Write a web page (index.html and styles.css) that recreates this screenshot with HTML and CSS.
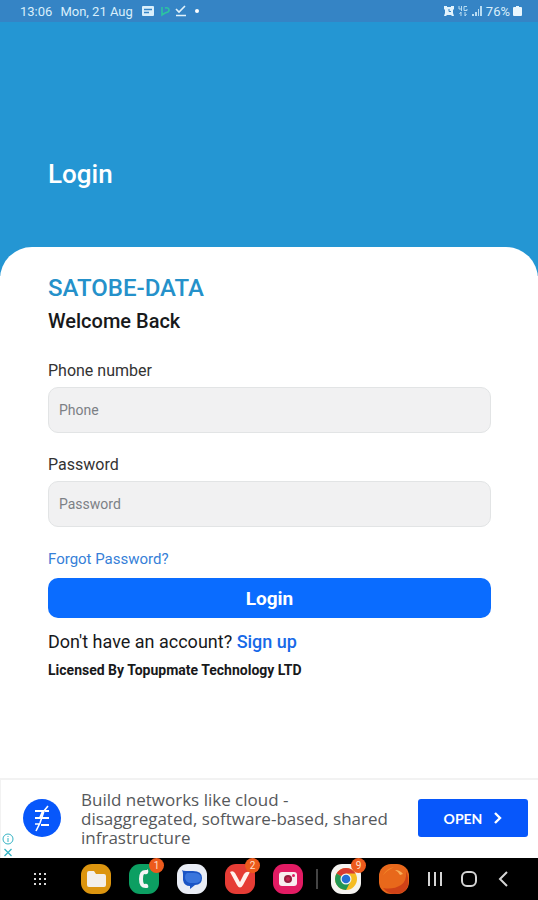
FILE: index.html
```html
<!DOCTYPE html>
<html lang="en">
<head>
<meta charset="utf-8">
<meta name="viewport" content="width=device-width, initial-scale=1">
<title>Login</title>
<link rel="stylesheet" href="styles.css">
</head>
<body>
<div class="status">
  <span>13:06</span>
  <span class="date">Mon, 21 Aug</span>
  <svg width="14" height="12" viewBox="0 0 14 12"><rect x="1" y="1" width="12" height="10" rx="1" fill="#d9effb"/><path d="M3 4.500h8M3 7.500h5" stroke="#3584c5" stroke-width="1.500"/></svg>
  <svg width="12" height="12" viewBox="0 0 12 12" fill="none" stroke="#2cc5a0" stroke-width="1.600"><path d="M3 2v8l3-2M6 3c4-1 5 2 3 4L6 8"/></svg>
  <svg width="12" height="12" viewBox="0 0 12 12" fill="none" stroke="#e2f3fc" stroke-width="1.600"><path d="M1 4l3 3 6-6M1 10.500h10"/></svg>
  <span class="dot"></span>
  <span class="status-right">
    <svg width="12" height="12" viewBox="0 0 12 12"><path d="M1 1h3v1h4V1h3v3l-1 1v3l1 3H9l-1-1H4l-1 1H1l1-3V5L1 4z" fill="#e2f3fc"/><circle cx="6" cy="6" r="4" fill="#e2f3fc"/><path d="M6 4v2.500h2" fill="none" stroke="#3584c5"/></svg>
    <svg width="10" height="12" viewBox="0 0 10 12" fill="none" stroke="#b9ddf3" stroke-width="1"><path d="M1 1v3h3M3.500 1v5M9 1.500H6v4h3V4M3 11V7L1.500 9M7 7v4l1.500-2"/></svg>
    <svg width="12" height="12" viewBox="0 0 12 12" fill="#b9ddf3"><path d="M1 9h2v2H1zM4 7h2v4H4zM7 4h1v7H7zM9 1h2v10H9z"/></svg>
    <span>76%</span>
    <svg width="9" height="12" viewBox="0 0 9 12"><path d="M3 1h3v1h2q1 0 1 1v7q0 1-1 1H1q-1 0-1-1V3q0-1 1-1h2z" fill="#e9f6fd"/></svg>
  </span>
</div>
<header class="hero"><h1>Login</h1></header>
<main class="card">
  <h2>SATOBE-DATA</h2>
  <p class="welcome">Welcome Back</p>
  <form>
    <label for="phone">Phone number</label>
    <input id="phone" type="tel" placeholder="Phone">
    <label for="password">Password</label>
    <input id="password" type="password" placeholder="Password">
    <a class="forgot" href="#">Forgot Password?</a>
    <button class="submit" type="submit">Login</button>
  </form>
  <p class="signup">Don't have an account? <a href="#">Sign up</a></p>
  <p class="license">Licensed By Topupmate Technology LTD</p>
</main>
<aside class="ad">
  <div class="ad-marks">
    <svg width="12" height="12" viewBox="0 0 12 12" fill="none" stroke="#36b3c4"><circle cx="6" cy="6" r="5"/><path d="M6 5v4M6 3v1"/></svg>
    <svg width="12" height="12" viewBox="0 0 12 12" stroke="#36b3c4" stroke-width="1.300"><path d="M2.500 3l7 7M9.500 3l-7 7"/></svg>
  </div>
  <svg class="ad-logo" width="38" height="38" viewBox="0 0 38 38"><circle cx="19" cy="19" r="19" fill="#0757fb"/><g fill="none" stroke="#fff" stroke-width="2"><path d="M12 12h8l-3 7h-5M22 12h4M19 19h7M18 26h8"/><path d="M12 25h4M13 32l4-8 4-12 4-5" stroke-width="1.600"/></g></svg>
  <p>Build networks like cloud - disaggregated, software-based, shared infrastructure</p>
  <button class="open" type="button">OPEN <svg width="8" height="12" viewBox="0 0 8 12" fill="none" stroke="#fff" stroke-width="2.400"><path d="M1 1l5 5-5 5"/></svg></button>
</aside>
<nav class="dock">
  <svg width="14" height="14" viewBox="0 0 14 14" fill="#d8d8d8"><path d="M1 1h2v2H1zM6 1h2v2H6zM11 1h2v2h-2zM1 6h2v2H1zM6 6h2v2H6zM11 6h2v2h-2zM1 11h2v2H1zM6 11h2v2H6zM11 11h2v2h-2z"/></svg>
  <span class="app"><svg viewBox="0 0 30 30"><rect width="30" height="30" rx="11" fill="#dc950f"/><path d="M6 9q0-2 2-2h5l2 3h8q2 0 2 2v9q0 2-2 2H8q-2 0-2-2z" fill="#f3efea"/></svg></span>
  <span class="app"><svg viewBox="0 0 30 30"><rect width="30" height="30" rx="11" fill="#0c9f62"/><path d="M18 6q-8-1-8 9t8 9q2 0 1-3-1-2-4-1-1-1-1-5t1-5q3 1 4-1 1-3-1-4z" fill="#f4f4f4"/></svg><b>1</b></span>
  <span class="app"><svg viewBox="0 0 30 30"><rect width="30" height="30" rx="11" fill="#e9edf5"/><path d="M5 6q1 1 4 1h7q9 0 9 7t-7 7l-5 4v-3q-6 0-7-6V10q0-2-1-4z" fill="#1b55c5"/><path d="M10 9h7q7 0 7 5t-6 5h-5q-5-1-5-6 0-3 2-4z" fill="#3975dd"/></svg></span>
  <span class="app"><svg viewBox="0 0 30 30"><rect width="30" height="30" rx="11" fill="#e63c35"/><path d="M5 8q3-2 5 1l5 9 4-8q2-3 6-2l-7 13q-3 5-6 0z" fill="#fff2ee"/></svg><b>2</b></span>
  <span class="app"><svg viewBox="0 0 30 30"><rect width="30" height="30" rx="11" fill="#e21b63"/><rect x="6" y="8" width="18" height="14" rx="3" fill="#f8edf0"/><circle cx="15" cy="15" r="4" fill="#941c3d"/><circle cx="15" cy="15" r="2" fill="#c62452"/><circle cx="20.500" cy="11.500" r="1.500" fill="#e21b63"/></svg></span>
  <i class="divider"></i>
  <span class="app"><svg viewBox="0 0 30 30"><rect width="30" height="30" rx="11" fill="#f5f4f1"/><circle cx="15" cy="15" r="11" fill="#f5bc22"/><path d="M15 15L5.500 9.500A11 11 0 0 1 24.500 9.500H15z" fill="#d83b30"/><path d="M5.500 9.500A11 11 0 0 0 15 26l4.500-8.500L15 15z" fill="#219653"/><circle cx="15" cy="15" r="5.500" fill="#f5f4f1"/><circle cx="15" cy="15" r="4.300" fill="#246fd5"/></svg><b>9</b></span>
  <span class="app"><svg viewBox="0 0 30 30"><rect width="30" height="30" rx="12" fill="#e8681b"/><path d="M27 7q1 10-5 14-8 5-18 3 5 6 12 6 10 0 13-8 1-8-2-15z" fill="#cf4217"/><path d="M4 11q4-7 11-8-6 3-11 8z" fill="#f18528"/><path d="M16 6q5 0 8 4l-3 1q-1-3-5-5z" fill="#f8b05b"/></svg></span>
  <button type="button" aria-label="Recent apps"><svg width="16" height="16" viewBox="0 0 16 16" stroke="#d5d5d5" stroke-width="2"><path d="M2 1v14M8 1v14M14 1v14"/></svg></button>
  <button type="button" aria-label="Home"><svg width="16" height="16" viewBox="0 0 16 16" fill="none" stroke="#d5d5d5" stroke-width="2"><rect x="1" y="1" width="14" height="14" rx="5"/></svg></button>
  <button type="button" aria-label="Back"><svg width="10" height="16" viewBox="0 0 10 16" fill="none" stroke="#d5d5d5" stroke-width="2"><path d="M9 1L2 8l7 7"/></svg></button>
</nav>
</body>
</html>
```
FILE: styles.css
```css
* { box-sizing: border-box; }
body {
  margin: 0;
  min-height: 100vh;
  display: flex;
  flex-direction: column;
  background: #fff;
  color: #18191b;
  font-family: Roboto, "Liberation Sans", sans-serif;
}
h1, h2, p { margin: 0; font-weight: 500; }
svg { display: block; flex: none; }
a { color: #1769e8; text-decoration: none; }
button { border: 0; padding: 0; font-family: inherit; }

.status {
  display: flex;
  align-items: center;
  gap: 4px;
  height: 22px;
  padding: 0 16px 0 20px;
  background: #3584c5;
  color: #d9effb;
  font-size: 13px;
}
.date { margin: 0 4px; }
.dot { width: 4px; height: 4px; margin-left: 4px; border-radius: 2px; background: #fff; }
.status-right { display: flex; align-items: center; gap: 3px; margin-left: auto; }

.hero {
  height: 254px;
  padding: 136px 48px 0;
  background: #2496d3;
  color: #fff;
}
.hero h1 { font-size: 26px; line-height: 32px; }

.card {
  flex: 1;
  margin-top: -29px;
  padding: 25px 47px 24px 48px;
  border-radius: 32px 32px 0 0;
  background: #fff;
}
.card h2 { font-size: 24px; line-height: 32px; color: #2591ca; }
.welcome { font-size: 20px; line-height: 34px; }
form { display: flex; flex-direction: column; margin-top: 20px; }
label { font-size: 16px; line-height: 26px; margin-bottom: 3px; color: #333; }
input {
  height: 46px;
  margin-bottom: 19px;
  padding: 0 10px;
  border: 1px solid #e2e4e5;
  border-radius: 10px;
  background: #f1f1f2;
  color: #333;
  font: 14px Roboto, sans-serif;
}
input::placeholder { color: #7c8085; opacity: 1; }
.forgot { align-self: flex-start; font-size: 15px; line-height: 26px; color: #3680d8; }
.submit {
  height: 40px;
  margin-top: 6px;
  border-radius: 10px;
  background: #0a6cff;
  color: #fff;
  font-size: 19px;
  font-weight: 700;
}
.signup { margin-top: 10px; font-size: 18px; font-weight: 400; line-height: 28px; }
.signup a { font-weight: 500; }
.license { font-size: 14px; font-weight: 700; line-height: 28px; }

.ad {
  position: relative;
  display: flex;
  align-items: center;
  min-height: 80px;
  padding: 0 10px 2px 22px;
  border: solid #f2f2f2;
  border-width: 2px 0 0 1px;
  font-family: "Open Sans", sans-serif;
}
.ad-marks { position: absolute; left: 1px; bottom: 0; display: grid; gap: 1px; }
.ad p { flex: 1; margin: 0 16px 0 20px; font-size: 17px; font-weight: 400; line-height: 19px; color: #56585b; }
.open {
  display: flex;
  align-items: center;
  justify-content: center;
  gap: 12px;
  width: 110px;
  height: 38px;
  border-radius: 3px;
  background: #0757fb;
  color: #fff;
  font-family: Lato, sans-serif;
  font-size: 14px;
  font-weight: 700;
}

.dock {
  display: grid;
  grid-template-columns: 64fr 48fr 48fr 48fr 48fr 47fr 11fr 48fr 48fr 34fr 34fr 34fr;
  place-items: center;
  height: 42px;
  padding: 0 18px 0 8px;
  background: #000;
}
.dock button { background: none; }
.app { position: relative; width: 30px; height: 30px; }
.app svg { width: 30px; height: 30px; }
.app b {
  position: absolute;
  top: -6px;
  right: -5px;
  width: 15px;
  height: 15px;
  border-radius: 8px;
  background: #ed5a1c;
  color: #ffe0cc;
  font-size: 10px;
  font-weight: 400;
  line-height: 15px;
  text-align: center;
}
.divider { width: 2px; height: 20px; background: #444; }
```
